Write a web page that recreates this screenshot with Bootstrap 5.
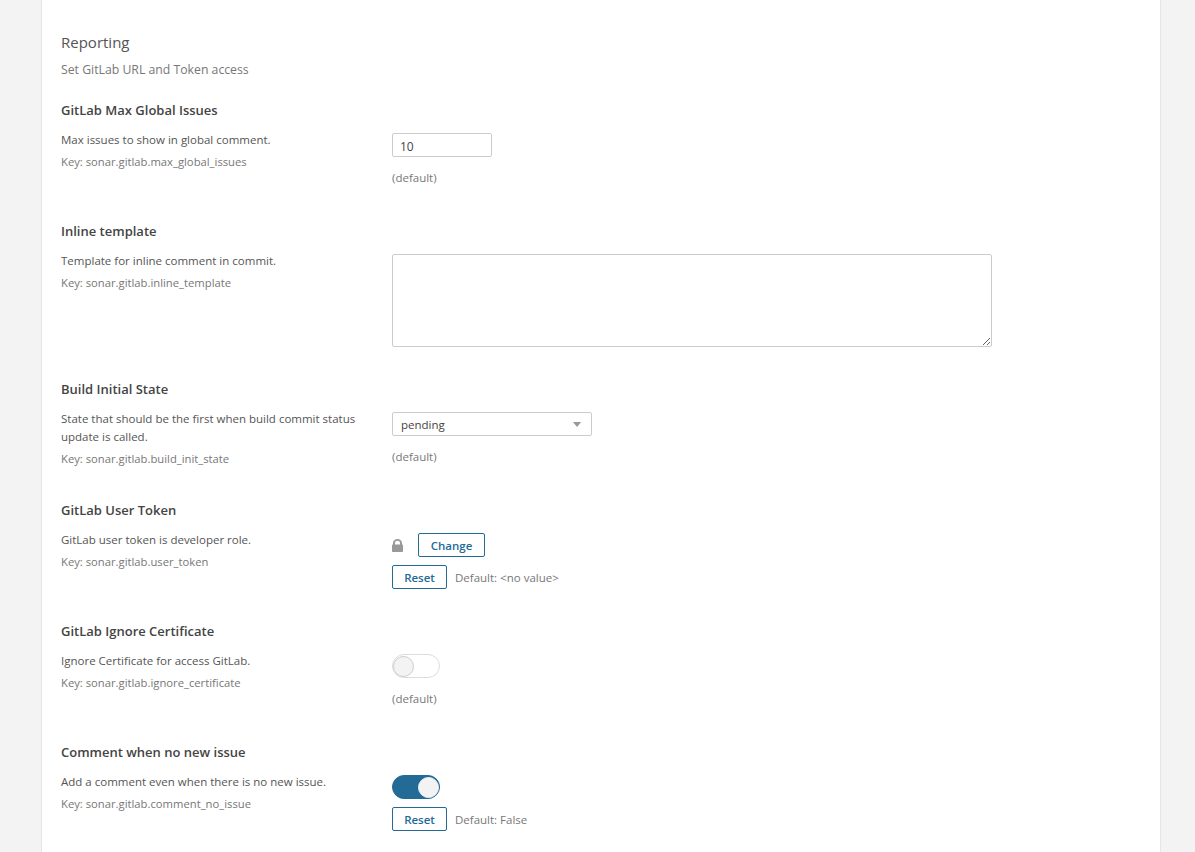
<!DOCTYPE html>
<html lang="en">
<head>
<meta charset="utf-8">
<title>Reporting</title>
<link rel="stylesheet" href="https://cdn.jsdelivr.net/npm/bootstrap@5.3.0/dist/css/bootstrap.min.css">
<style>
html, body { height: 100%; }
body { background: #f3f3f3; font-family: "Open Sans", "Noto Sans", "Liberation Sans", sans-serif; font-size: 12px; color: #444; overflow: hidden; }
.sheet { margin: 0 34px 0 41px; height: 852px; background: #fff; border-left: 1px solid #e6e6e6; border-right: 1px solid #e6e6e6; padding: 30px 19px 0; }
.sheet-title { font-size: 15px; line-height: 24px; font-weight: 400; color: #555; margin: 0; }
.sheet-sub { font-size: 12.25px; line-height: 16px; color: #777; margin: 8px 0 22px; }
.setting { padding-bottom: 32px; }
.setting-name { font-size: 13px; line-height: 20px; font-weight: 600; color: #444; margin: 0 0 13px; }
.setting-left { width: 331px; flex: none; padding-right: 30px; }
.setting-desc { font-size: 11.5px; line-height: 18px; color: #555; margin: -2px 0 4px; }
.setting-key { line-height: 18px; color: #777; margin: 0; font-size: 11.25px; }
.field-num { width: 100px; height: 24px; padding: 3px 7px 0; font-size: 12px; color: #444; border: 1px solid #ccc; border-radius: 2px; }
.field-area { width: 600px; height: 93px; padding: 4px 8px; border: 1px solid #ccc; border-radius: 2px; display: block; }
.field-select { width: 200px; height: 24px; padding: 1px 8px 0; font-size: 11.5px; color: #444; border: 1px solid #ccc; border-radius: 2px; background-image: url("data:image/svg+xml,%3Csvg xmlns='http://www.w3.org/2000/svg' width='10' height='5'%3E%3Cpath d='M0 0h9L4.500 5z' fill='%23999'/%3E%3C/svg%3E"); background-size: 9px 5px; background-position: right 9px center; }
.note { font-size: 11.5px; line-height: 16px; color: #777; margin: 13px 0 3px; }
.note-inline { font-size: 11.5px; line-height: 16px; color: #777; padding-top: 2px; margin-left: 8px; }
.btn-sq { height: 24px; width: 67px; padding: 1px 0 0; font-size: 11.5px; line-height: 23px; font-weight: 600; color: #236a97; background: #fff; border: 1px solid #236a97; border-radius: 2px; display: inline-flex; align-items: center; justify-content: center; }
.btn-sq:hover { color: #236a97; background: #fff; border-color: #236a97; }
.btn-reset { width: 55px; }
.reset-row { margin-top: 8px; }
.switcher { width: 48px; height: 24px; border-radius: 12px; border: 1px solid #ddd; background: #fff; }
.switcher i { display: block; width: 21px; height: 21px; border-radius: 50%; background: #f3f3f3; border: 1px solid #ccc; }
.switcher.is-on { background: #236a97; border-color: #236a97; justify-content: flex-end; }
.switcher.is-on i { border-color: #f3f3f3; }
.lock { width: 11px; height: 13px; fill: #999; margin-right: 15px; }
</style>
</head>
<body>
<main class="sheet">
  <h2 class="sheet-title">Reporting</h2>
  <p class="sheet-sub">Set GitLab URL and Token access</p>

  <section class="setting">
    <h3 class="setting-name">GitLab Max Global Issues</h3>
    <div class="d-flex">
      <div class="setting-left">
        <p class="setting-desc">Max issues to show in global comment.</p>
        <p class="setting-key">Key: sonar.gitlab.max_global_issues</p>
      </div>
      <div>
        <input class="form-control field-num" type="text" value="10">
        <p class="note">(default)</p>
      </div>
    </div>
  </section>

  <section class="setting">
    <h3 class="setting-name">Inline template</h3>
    <div class="d-flex">
      <div class="setting-left">
        <p class="setting-desc">Template for inline comment in commit.</p>
        <p class="setting-key">Key: sonar.gitlab.inline_template</p>
      </div>
      <div>
        <textarea class="form-control field-area"></textarea>
      </div>
    </div>
  </section>

  <section class="setting">
    <h3 class="setting-name">Build Initial State</h3>
    <div class="d-flex">
      <div class="setting-left">
        <p class="setting-desc">State that should be the first when build commit status update is called.</p>
        <p class="setting-key">Key: sonar.gitlab.build_init_state</p>
      </div>
      <div>
        <select class="form-select field-select"><option>pending</option></select>
        <p class="note">(default)</p>
      </div>
    </div>
  </section>

  <section class="setting">
    <h3 class="setting-name">GitLab User Token</h3>
    <div class="d-flex">
      <div class="setting-left">
        <p class="setting-desc">GitLab user token is developer role.</p>
        <p class="setting-key">Key: sonar.gitlab.user_token</p>
      </div>
      <div>
        <div class="d-flex align-items-center">
          <svg class="lock" viewBox="0 0 11 13" aria-hidden="true"><path d="M1 5.500V4a4.500 4 0 0 1 9 0v1.500h.2a.8.800 0 0 1 .8.800v5.900a.8.800 0 0 1-.8.800H.8a.8.800 0 0 1-.8-.800V6.300a.8.800 0 0 1 .8-.800zM3 5.500h5V4a2.500 2.200 0 0 0-5 0z"/></svg>
          <button type="button" class="btn btn-sq">Change</button>
        </div>
        <div class="d-flex align-items-center reset-row">
          <button type="button" class="btn btn-sq btn-reset">Reset</button>
          <span class="note-inline">Default: &lt;no value&gt;</span>
        </div>
      </div>
    </div>
  </section>

  <section class="setting">
    <h3 class="setting-name">GitLab Ignore Certificate</h3>
    <div class="d-flex">
      <div class="setting-left">
        <p class="setting-desc">Ignore Certificate for access GitLab.</p>
        <p class="setting-key">Key: sonar.gitlab.ignore_certificate</p>
      </div>
      <div>
        <div class="switcher d-flex align-items-center"><i></i></div>
        <p class="note">(default)</p>
      </div>
    </div>
  </section>

  <section class="setting">
    <h3 class="setting-name">Comment when no new issue</h3>
    <div class="d-flex">
      <div class="setting-left">
        <p class="setting-desc">Add a comment even when there is no new issue.</p>
        <p class="setting-key">Key: sonar.gitlab.comment_no_issue</p>
      </div>
      <div>
        <div class="switcher is-on d-flex align-items-center"><i></i></div>
        <div class="d-flex align-items-center reset-row">
          <button type="button" class="btn btn-sq btn-reset">Reset</button>
          <span class="note-inline">Default: False</span>
        </div>
      </div>
    </div>
  </section>
</main>
<script src="https://cdn.jsdelivr.net/npm/bootstrap@5.3.0/dist/js/bootstrap.bundle.min.js"></script>
</body>
</html>
